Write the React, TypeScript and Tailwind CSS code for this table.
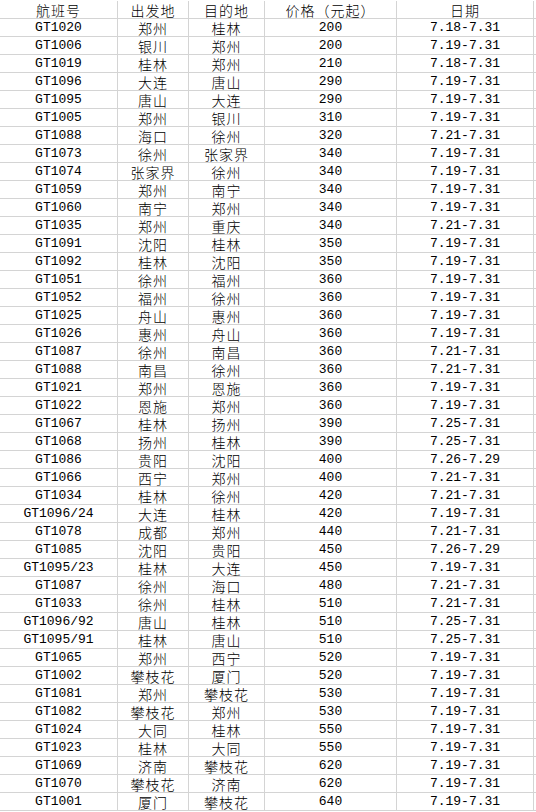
const rows: [string, string, string, string, string][] = [
  ['GT1020', '郑州', '桂林', '200', '7.18-7.31'],
  ['GT1006', '银川', '郑州', '200', '7.19-7.31'],
  ['GT1019', '桂林', '郑州', '210', '7.18-7.31'],
  ['GT1096', '大连', '唐山', '290', '7.19-7.31'],
  ['GT1095', '唐山', '大连', '290', '7.19-7.31'],
  ['GT1005', '郑州', '银川', '310', '7.19-7.31'],
  ['GT1088', '海口', '徐州', '320', '7.21-7.31'],
  ['GT1073', '徐州', '张家界', '340', '7.19-7.31'],
  ['GT1074', '张家界', '徐州', '340', '7.19-7.31'],
  ['GT1059', '郑州', '南宁', '340', '7.19-7.31'],
  ['GT1060', '南宁', '郑州', '340', '7.19-7.31'],
  ['GT1035', '郑州', '重庆', '340', '7.21-7.31'],
  ['GT1091', '沈阳', '桂林', '350', '7.19-7.31'],
  ['GT1092', '桂林', '沈阳', '350', '7.19-7.31'],
  ['GT1051', '徐州', '福州', '360', '7.19-7.31'],
  ['GT1052', '福州', '徐州', '360', '7.19-7.31'],
  ['GT1025', '舟山', '惠州', '360', '7.19-7.31'],
  ['GT1026', '惠州', '舟山', '360', '7.19-7.31'],
  ['GT1087', '徐州', '南昌', '360', '7.21-7.31'],
  ['GT1088', '南昌', '徐州', '360', '7.21-7.31'],
  ['GT1021', '郑州', '恩施', '360', '7.19-7.31'],
  ['GT1022', '恩施', '郑州', '360', '7.19-7.31'],
  ['GT1067', '桂林', '扬州', '390', '7.25-7.31'],
  ['GT1068', '扬州', '桂林', '390', '7.25-7.31'],
  ['GT1086', '贵阳', '沈阳', '400', '7.26-7.29'],
  ['GT1066', '西宁', '郑州', '400', '7.21-7.31'],
  ['GT1034', '桂林', '徐州', '420', '7.21-7.31'],
  ['GT1096/24', '大连', '桂林', '420', '7.19-7.31'],
  ['GT1078', '成都', '郑州', '440', '7.21-7.31'],
  ['GT1085', '沈阳', '贵阳', '450', '7.26-7.29'],
  ['GT1095/23', '桂林', '大连', '450', '7.19-7.31'],
  ['GT1087', '徐州', '海口', '480', '7.21-7.31'],
  ['GT1033', '徐州', '桂林', '510', '7.21-7.31'],
  ['GT1096/92', '唐山', '桂林', '510', '7.25-7.31'],
  ['GT1095/91', '桂林', '唐山', '510', '7.25-7.31'],
  ['GT1065', '郑州', '西宁', '520', '7.19-7.31'],
  ['GT1002', '攀枝花', '厦门', '520', '7.19-7.31'],
  ['GT1081', '郑州', '攀枝花', '530', '7.19-7.31'],
  ['GT1082', '攀枝花', '郑州', '530', '7.19-7.31'],
  ['GT1024', '大同', '桂林', '550', '7.19-7.31'],
  ['GT1023', '桂林', '大同', '550', '7.19-7.31'],
  ['GT1069', '济南', '攀枝花', '620', '7.19-7.31'],
  ['GT1070', '攀枝花', '济南', '620', '7.19-7.31'],
  ['GT1001', '厦门', '攀枝花', '640', '7.19-7.31'],
]

// column widths include the 1px right grid line
const widths = ['w-[118px]', 'w-[71px]', 'w-[76px]', 'w-[132px]', 'w-[137px]']
const cjk = "font-['Noto_Sans_CJK_SC',sans-serif] font-light text-[14px] tracking-[1px]"
const mono = "font-['Liberation_Mono','Noto_Sans_CJK_SC',monospace] text-[13px]"

function Row({ cells, header }: { cells: string[]; header?: boolean }) {
  return (
    <div className="flex h-[18px] border-b border-[#d4d4d4]">
      {cells.map((c, i) => {
        const isMono = !header && (i === 0 || i === 3 || i === 4)
        return (
          <div
            key={i}
            className={`${widths[i]} shrink-0 flex items-center justify-center leading-[14px] border-r border-[#d4d4d4] text-black ${isMono ? mono : cjk}`}
          >
            {c}
          </div>
        )
      })}
    </div>
  )
}

export default function App() {
  return (
    <div className="w-[536px] h-[812px] bg-white pt-px overflow-hidden">
      <Row header cells={['航班号', '出发地', '目的地', '价格（元起）', '日期']} />
      {rows.map((r, i) => (
        <Row key={i} cells={r} />
      ))}
    </div>
  )
}
